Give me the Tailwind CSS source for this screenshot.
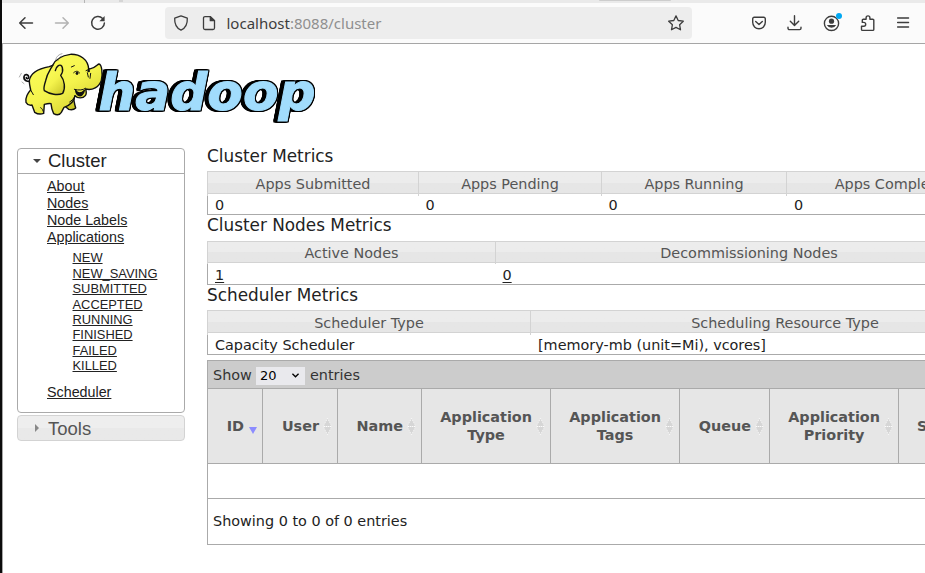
<!DOCTYPE html>
<html lang="en">
<head>
<meta charset="utf-8">
<title>All Applications</title>
<script src="https://cdn.jsdelivr.net/npm/@tailwindcss/browser@4"></script>
</head>
<body class="w-[925px] h-[573px] overflow-hidden bg-white border-l-2 border-[#0c0c0c] font-['DejaVu_Sans',sans-serif] text-[#222]">
<svg class="absolute w-0 h-0">
  <symbol id="sort" viewBox="0 0 9 17"><path d="M4.500 .3 9 8.300H0ZM4.500 16.700 9 8.700H0Z" fill="#d6d6d6"/><path d="M4.500 .3 8.800 8.500H.2ZM4.500 16.700 8.800 8.500H.2Z" fill="none" stroke="#fff" stroke-width=".7" stroke-dasharray="1.200 .8"/></symbol>
</svg>

<!-- Browser chrome -->
<div class="h-[3px] bg-[#eaeaea] flex">
  <div class="ml-[82px] w-px bg-[#b5b5b5]"></div><div class="ml-[34px] w-[4px] h-[2px] bg-[#d5d5d5]"></div>
  <div class="ml-[476px] w-[72px] h-[1px] rounded-b bg-[#cdcdcd]"></div>
</div>
<div class="h-[40px] bg-[#fbfbfb] flex items-center text-[#3d3d3d]">
  <svg class="ml-[16px] w-4 h-4" viewBox="0 0 16 16" fill="none" stroke="currentColor" stroke-width="1.500" stroke-linecap="round" stroke-linejoin="round"><path d="M14.500 8H1.700M7 2.700 1.700 8 7 13.300"/></svg>
  <svg class="ml-[20px] w-4 h-4 text-[#b3b3b3]" viewBox="0 0 16 16" fill="none" stroke="currentColor" stroke-width="1.500" stroke-linecap="round" stroke-linejoin="round"><path d="M1.500 8h12.800M9 2.700 14.300 8 9 13.300"/></svg>
  <svg class="ml-[20px] w-4 h-4" viewBox="0 0 16 16" fill="none" stroke="currentColor" stroke-width="1.500" stroke-linecap="round"><path d="M12.600 3.400A6.400 6.400 0 1 0 14.400 8"/><path d="M14.600 1v5.200H9.400Z" fill="currentColor" stroke="none"/></svg>
  <div class="ml-[59px] w-[527px] h-8 bg-[#ededed] rounded-[4px] flex items-center">
    <svg class="ml-[8px] w-4 h-4" viewBox="0 0 16 16" fill="none" stroke="currentColor" stroke-width="1.300" stroke-linejoin="round"><path d="M8 .9 14.300 3.200C14.600 8.500 12.500 13 8 15.200 3.500 13 1.400 8.500 1.700 3.200Z"/></svg>
    <svg class="ml-[12px] w-4 h-4" viewBox="0 0 16 16" fill="none" stroke="currentColor" stroke-width="1.300" stroke-linejoin="round"><path d="M9.300 1.600H4A1.500 1.500 0 0 0 2.500 3.100V13A1.500 1.500 0 0 0 4 14.500h8A1.500 1.500 0 0 0 13.500 13V5.700Z"/><path d="M9.300 1.600v4.100h4.200Z" fill="currentColor"/></svg>
    <div class="ml-[9.500px] w-[441.500px] font-['Noto_Sans',sans-serif] text-[15px] leading-5 text-[#3d3d3d]">localhost<span class="text-[#8f8f8f]">:8088/cluster</span></div>
    <svg class="w-4 h-4 shrink-0" viewBox="0 0 16 16" fill="none" stroke="currentColor" stroke-width="1.300" stroke-linejoin="round"><path d="m8 .9 2.200 4.600 5.100.7-3.700 3.500.9 5.100L8 12.400l-4.500 2.400.9-5.100L.7 6.200l5.100-.7Z"/></svg>
  </div>
  <svg class="ml-[59px] w-4 h-4" viewBox="0 0 16 16" fill="none" stroke="currentColor" stroke-width="1.400" stroke-linecap="round" stroke-linejoin="round"><path d="M3.200 2.200h9.600a1.500 1.500 0 0 1 1.500 1.500v3.600a6.300 6.500 0 0 1-12.600 0V3.700a1.500 1.500 0 0 1 1.500-1.500ZM4.700 6.500 8 9.600l3.300-3.100"/></svg>
  <svg class="ml-[20px] w-4 h-4" viewBox="0 0 16 16" fill="none" stroke="currentColor" stroke-width="1.400" stroke-linecap="round" stroke-linejoin="round"><path d="M7.500 .8v9.500M3.300 6.200 7.500 10.400l4.200-4.200M1 12.200v1a1.400 1.400 0 0 0 1.400 1.400h10.200a1.400 1.400 0 0 0 1.400-1.400v-1"/></svg>
  <svg class="ml-[20px] w-5 h-5 overflow-visible" viewBox="0 0 20 20"><circle cx="8.500" cy="10.400" r="7.100" fill="none" stroke="currentColor" stroke-width="1.400"/><circle cx="8.500" cy="8.200" r="2.600" fill="currentColor"/><path d="M3.800 12.100h9.400a5.400 5.400 0 0 1-9.400 0Z" fill="currentColor"/><circle cx="16" cy="3" r="3" fill="#00a8f3"/></svg>
  <svg class="ml-[17px] w-4 h-4 overflow-visible" viewBox="0 0 16 16" fill="none" stroke="currentColor" stroke-width="1.400" stroke-linejoin="round"><path d="M2.500 15.400h10.300a1 1 0 0 0 1-1V5.200a1 1 0 0 0-1-1H9.900V2.800a1.900 1.900 0 0 0-3.800 0v1.400H3.300a1 1 0 0 0-1 1v2.200h1.500a1.900 1.900 0 0 1 0 3.800H1.500v3.200a1 1 0 0 0 1 1Z"/></svg>
  <svg class="ml-[19px] w-4 h-4" viewBox="0 0 16 16" stroke="currentColor" stroke-width="1.300" stroke-linecap="round"><path d="M2.600 3h11M2.600 7.500h11M2.600 12h11"/></svg>
</div>

<!-- Page -->
<div class="h-[530px] border-t border-l border-[#a6a6a6]">
  <svg class="block ml-[14px] w-[310px] h-[104px]" viewBox="17 44 310 104" role="img">
    <defs><linearGradient id="hide" x1="0" y1="0" x2=".7" y2="1"><stop offset="0" stop-color="#fdff5c"/><stop offset=".6" stop-color="#f4f34c"/><stop offset="1" stop-color="#d2cf30"/></linearGradient></defs>
    <g class="[filter:drop-shadow(1.5px_0_0_#000)_drop-shadow(0_1px_0_#000)_drop-shadow(0_-1px_0_#000)_drop-shadow(-2px_0_0_#000)_drop-shadow(-2px_0_0_#000)]">
      <text x="98.500" y="110" textLength="217" lengthAdjust="spacingAndGlyphs" font-family="DejaVu Sans, sans-serif" font-weight="700" font-style="italic" font-size="51.500" fill="#a1dcfc" stroke="#a1dcfc" stroke-width="1">hadoop</text>
    </g>
    <g transform="translate(10 45) scale(.33333)" stroke="#111" stroke-width="4.200" stroke-linecap="round" stroke-linejoin="round" fill="url(#hide)">
      <path d="M66 108C52 112 40 106 42 95C44 85 56 88 56 97C55 102 49 102 49 98" fill="none" stroke-width="5"/>
      <path d="M163 182C168 186 172 190 176 193C184 195 192 194 197 189C195 178 189 170 192 152Z" fill="#cbc826"/>
      <path d="M62 135C54 143 45 159 48 172C55 184 66 180 66 180L74 202C82 207 94 208 101 205L103 178C111 176 118 175 123 176C124 188 128 200 131 206C140 211 149 210 154 202L162 187C180 181 193 167 195 152C202 161 219 161 226 152C231 146 229 139 227 132C247 137 268 126 274 106C279 85 275 58 267 57C262 57 260 69 236 73C235 43 210 27 181 28C158 31 137 42 128 61L118 65C92 70 61 79 58 108C58 121 61 128 62 135Z"/>
      <path d="M128 61C119 77 111 86 107 107C102 122 101 133 103 137C119 148 144 152 158 145C167 130 164 106 152 91C163 77 157 54 145 62C139 66 137 70 136 77"/>
      <path d="M197 136C201 145 214 147 223 136C221 147 213 155 206 151C200 148 198 143 197 136Z" fill="#111"/>
      <path d="M191 83C198 76 207 78 208 84M228 77L240 71M193 133C207 137 220 135 226 130M232 83L235 96M242 85L240 100M184 66L193 62M62 135L70 149M101 205C100 196 96 190 92 188M195 152C193 160 184 168 179 171" fill="none" stroke-width="3"/>
      <ellipse cx="201" cy="85" rx="4" ry="5" fill="#111" stroke="none"/><ellipse cx="236" cy="78" rx="4" ry="4" fill="#111" stroke="none"/>
      <path d="M28 96L34 85M36 111L42 116M137 44C139 34 147 28 156 26M144 47C145 41 149 36 153 34" fill="none" stroke="#777" stroke-width="1.800"/>
    </g>
  </svg>

  <div class="flex">
    <!-- Navigation -->
    <div class="ml-[14px] w-[168px] shrink-0 font-['Liberation_Sans',Arial,sans-serif]">
      <div class="h-[265px] border border-[#aaa] rounded-[4px]">
        <div class="h-[25px] border-b border-[#aaa] flex items-center text-[18.500px] leading-[24px]">
          <span class="ml-[15px] w-0 h-0 border-x-4 border-x-transparent border-t-4 border-t-[#444]"></span><span class="ml-[7px]">Cluster</span>
        </div>
        <ul class="pl-[29px] pt-[4px] text-[14.300px] leading-[17px] underline decoration-1 underline-offset-[1px]">
          <li>About</li><li>Nodes</li><li>Node Labels</li><li>Applications</li>
        </ul>
        <ul class="pl-[54.500px] pt-[4.300px] text-[12.880px] leading-[15.430px] underline decoration-1 underline-offset-[1px]">
          <li>NEW</li><li>NEW_SAVING</li><li>SUBMITTED</li><li>ACCEPTED</li><li>RUNNING</li><li>FINISHED</li><li>FAILED</li><li>KILLED</li>
        </ul>
        <div class="pl-[29px] pt-[10px] text-[14.300px] leading-[17px] underline decoration-1 underline-offset-[1px]">Scheduler</div>
      </div>
      <div class="mt-[2px] h-[26px] border border-[#d3d3d3] rounded-[4px] bg-linear-to-b from-[#eee] from-50% to-[#e9e9e9] to-50% flex items-center text-[18.500px] text-[#555]">
        <span class="ml-[17px] w-0 h-0 border-y-4 border-y-transparent border-l-4 border-l-[#888]"></span><span class="ml-[9px] pt-[2px]">Tools</span>
      </div>
    </div>

    <!-- Metrics and applications -->
    <div class="ml-[22px] w-[718px] shrink-0 overflow-x-clip text-[14.400px]">
    <div class="w-[1200px]">
      <h3 class="h-[23px] text-[16.870px] leading-[16px]">Cluster Metrics</h3>
      <div class="h-[23px] grid grid-cols-[212px_183px_185px_215px_405px] border-y border-[#d3d3d3] bg-linear-to-b from-[#ececec] from-50% to-[#e6e6e6] to-50% text-[#555] text-center leading-[24px]">
        <div class="border-x border-[#d3d3d3]">Apps Submitted</div><div class="border-r border-[#d3d3d3]">Apps Pending</div><div class="border-r border-[#d3d3d3]">Apps Running</div><div class="border-r border-[#d3d3d3]">Apps Completed</div><div></div>
      </div>
      <div class="h-[21px] grid grid-cols-[211px_183px_185px_1fr] border-l border-b border-[#aaa] leading-[22px]">
        <div class="pl-[7px]">0</div><div class="pl-[6.500px]">0</div><div class="pl-[6.500px]">0</div><div class="pl-[7px]">0</div>
      </div>
      <h3 class="h-[26px] text-[16.870px] leading-[20px]">Cluster Nodes Metrics</h3>
      <div class="h-[22px] grid grid-cols-[289px_507px_404px] border-y border-[#d3d3d3] bg-linear-to-b from-[#ececec] from-50% to-[#e6e6e6] to-50% text-[#555] text-center leading-[22px]">
        <div class="border-x border-[#d3d3d3]">Active Nodes</div><div class="border-r border-[#d3d3d3]">Decommissioning Nodes</div><div></div>
      </div>
      <div class="h-[22px] grid grid-cols-[288px_1fr] border-l border-b border-[#aaa] leading-[24px] underline decoration-1 underline-offset-[2px]">
        <div class="pl-[7px]">1</div><div class="pl-[6.500px]">0</div>
      </div>
      <h3 class="h-[25px] text-[16.870px] leading-[20px]">Scheduler Metrics</h3>
      <div class="h-[23px] grid grid-cols-[324px_509px_367px] border-y border-[#d3d3d3] bg-linear-to-b from-[#ececec] from-50% to-[#e6e6e6] to-50% text-[#555] text-center leading-[24px]">
        <div class="border-x border-[#d3d3d3]">Scheduler Type</div><div class="border-r border-[#d3d3d3]">Scheduling Resource Type</div><div></div>
      </div>
      <div class="h-[22px] grid grid-cols-[323px_1fr] border-l border-b border-[#aaa] leading-[24px]">
        <div class="pl-[7px]">Capacity Scheduler</div><div class="pl-[7px]">[memory-mb (unit=Mi), vcores]</div>
      </div>

      <div class="mt-[5px] border border-[#aaa]">
        <div class="h-[27px] bg-[#ccc] flex items-center text-[#333]">
          <span class="ml-[5px] w-[43px] pt-[2px]">Show</span>
          <span class="w-[49px] h-[18px] mt-[2px] bg-[#e9e9ed] text-black text-[13px] leading-[19px] flex items-center pl-[4px]">20<svg class="ml-[15px] w-[7px] h-[5px] overflow-visible" viewBox="0 0 8 5" fill="none" stroke="#000" stroke-width="1.500"><path d="M.5.5 4 4 7.500.5"/></svg></span>
          <span class="ml-[5px] pt-[2px]">entries</span>
        </div>
        <div class="h-[76px] grid grid-cols-[55px_75px_84px_129px_129px_90px_129px_1fr] border-y border-[#aaa] bg-[#e6e6e6] text-[#555] font-bold text-center leading-[18px]">
          <div class="border-r border-[#aaa] flex items-center justify-end pr-[5px]">ID<span class="ml-[5px] mt-[8px] w-0 h-0 border-x-4 border-x-transparent border-t-[7px] border-t-[#8c8cff]"></span></div>
          <div class="border-r border-[#aaa] flex items-center justify-end pr-[5px]">User<svg class="ml-[4px] w-[9px] h-[17px]"><use href="#sort"/></svg></div>
          <div class="border-r border-[#aaa] flex items-center justify-end pr-[5px]">Name<svg class="ml-[4px] w-[9px] h-[17px]"><use href="#sort"/></svg></div>
          <div class="border-r border-[#aaa] flex items-center justify-end pr-[5px]"><span>Application<br>Type</span><svg class="ml-[4px] w-[9px] h-[17px]"><use href="#sort"/></svg></div>
          <div class="border-r border-[#aaa] flex items-center justify-end pr-[5px]"><span>Application<br>Tags</span><svg class="ml-[4px] w-[9px] h-[17px]"><use href="#sort"/></svg></div>
          <div class="border-r border-[#aaa] flex items-center justify-end pr-[5px]">Queue<svg class="ml-[4px] w-[9px] h-[17px]"><use href="#sort"/></svg></div>
          <div class="border-r border-[#aaa] flex items-center justify-end pr-[5px]"><span>Application<br>Priority</span><svg class="ml-[4px] w-[9px] h-[17px]"><use href="#sort"/></svg></div>
          <div class="flex items-center pl-[18px]">StartTime</div>
        </div>
        <div class="h-[35px] border-b border-[#aaa]"></div>
        <div class="h-[45px] pl-[5px] leading-[44px]">Showing 0 to 0 of 0 entries</div>
      </div>
    </div>
    </div>
  </div>
</div>
</body>
</html>
